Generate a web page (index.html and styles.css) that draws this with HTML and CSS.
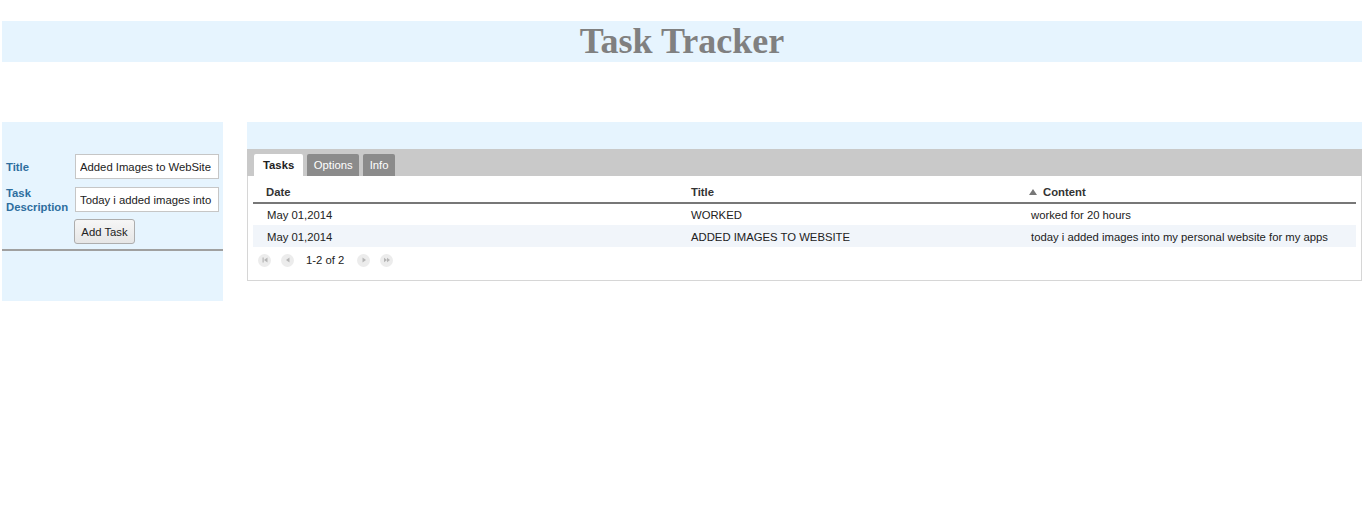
FILE: index.html
```html
<!DOCTYPE html>
<html>
<head>
<meta charset="utf-8">
<title>Task Tracker</title>
<link rel="stylesheet" href="styles.css">
</head>
<body>
<div class="page">
  <header class="banner"><h1>Task Tracker</h1></header>
  <div class="main">
    <aside class="side">
      <form class="form">
        <div class="frow">
          <label class="lbl">Title</label>
          <input class="inp" type="text" value="Added Images to WebSite">
        </div>
        <div class="frow">
          <label class="lbl">Task Description</label>
          <input class="inp" type="text" value="Today i added images into my personal website for my apps">
        </div>
        <div class="frow">
          <span class="lbl"></span>
          <button type="button" class="btn">Add Task</button>
        </div>
      </form>
      <div class="rule"></div>
    </aside>
    <section class="content">
      <div class="strip"></div>
      <div class="box">
        <div class="tabs">
          <span class="tab active">Tasks</span>
          <span class="tab">Options</span>
          <span class="tab">Info</span>
        </div>
        <table class="grid">
          <colgroup><col class="c1"><col class="c2"><col class="c3"></colgroup>
          <thead>
            <tr><th>Date</th><th>Title</th><th class="sorted"><span class="tri"></span>Content</th></tr>
          </thead>
          <tbody>
            <tr><td>May 01,2014</td><td>WORKED</td><td class="ct">worked for 20 hours</td></tr>
            <tr class="alt"><td>May 01,2014</td><td>ADDED IMAGES TO WEBSITE</td><td class="ct">today i added images into my personal website for my apps</td></tr>
          </tbody>
        </table>
        <div class="pager">
          <span class="pb"><svg width="12" height="12" viewBox="0 0 12 12"><rect x="3.5" y="3.5" width="1.2" height="5" fill="#b5b5b5"/><path d="M8.5 3.5 L5 6 L8.5 8.5 Z" fill="#b5b5b5"/></svg></span>
          <span class="pb pb2"><svg width="12" height="12" viewBox="0 0 12 12"><path d="M7.5 3.5 L4 6 L7.5 8.5 Z" fill="#b5b5b5"/></svg></span>
          <span class="pinfo">1-2 of 2</span>
          <span class="pb"><svg width="12" height="12" viewBox="0 0 12 12"><path d="M4.5 3.5 L8 6 L4.5 8.5 Z" fill="#b5b5b5"/></svg></span>
          <span class="pb"><svg width="12" height="12" viewBox="0 0 12 12"><path d="M3 3.7 L6 6 L3 8.3 Z M6 3.7 L9 6 L6 8.3 Z" fill="#b5b5b5"/></svg></span>
        </div>
      </div>
    </section>
  </div>
</div>
</body>
</html>
```
FILE: styles.css
```css
* { box-sizing: border-box; }
html, body { margin: 0; padding: 0; background: #fff; }
body { font-family: "Liberation Sans", Arial, sans-serif; font-size: 11.3px; color: #222; }
.page { padding: 21px 4px 0 2px; }
.banner { background: #e6f4fe; height: 41px; display: flex; align-items: center; justify-content: center; }
.banner h1 { margin: 0; font-family: "Liberation Serif", "Times New Roman", serif; font-weight: bold; font-size: 36px; color: #808080; line-height: 41px; }
.main { display: flex; align-items: flex-start; gap: 24px; margin-top: 60px; }
.side { width: 221px; height: 179px; background: #e6f4fe; padding-top: 32px; }
.form { display: flex; flex-direction: column; gap: 8px; padding-left: 4px; }
.frow { display: flex; align-items: center; height: 25px; }
.lbl { width: 69px; font-weight: bold; color: #2e6e9e; font-size: 11.3px; line-height: 14px; }
.inp { width: 144px; height: 25px; border: 1px solid #c6c6c6; background: #fff; font-family: "Liberation Sans", Arial, sans-serif; font-size: 11.3px; color: #222; padding: 0 4px; margin: 0; }
.btn { width: 61px; height: 25px; margin: -2px 0 0 -1px; font-family: "Liberation Sans", Arial, sans-serif; font-size: 11.3px; color: #222; background: linear-gradient(#f6f6f6, #e6e6e6); border: 1px solid #adadad; border-radius: 3px; padding: 0; }
.rule { margin-top: 4px; height: 2px; background: #a0a0a0; }
.content { flex: 1; }
.strip { height: 27px; background: #e6f4fe; }
.box { border: 1px solid #d6d6d6; border-top: 0; height: 132px; }
.tabs { background: #c9c9c9; height: 27px; display: flex; align-items: flex-end; gap: 4px; padding-left: 7px; margin: 0 -1px; }
.tab { height: 22px; padding: 0 6.5px; line-height: 22px; background: #8b8b8b; color: #fff; border-radius: 2px 2px 0 0; }
.tab.active { background: #fff; color: #222; font-weight: bold; padding: 0 9px; }
.grid { margin: 4px 5px 0 5px; width: calc(100% - 10px); border-collapse: collapse; table-layout: fixed; }
.c1 { width: 425px; }
.c2 { width: 340px; }
.grid th { text-align: left; font-weight: bold; color: #333; height: 23px; padding: 2px 0 0 13px; border-bottom: 2px solid #777; vertical-align: middle; }
.grid th.sorted { padding-left: 11px; }
.tri { display: inline-block; width: 0; height: 0; border-left: 4px solid transparent; border-right: 4px solid transparent; border-bottom: 6px solid #777; margin-right: 6px; vertical-align: 1px; }
.grid td { height: 22px; padding: 1px 0 0 14px; color: #222; }
.grid td:nth-child(2) { padding-left: 13px; }
.grid td.ct { padding-left: 13px; }
.grid tr.alt td { background: #f1f5fa; }
.pager { display: flex; align-items: center; margin: 5px 0 0 10px; height: 16px; }
.pb { width: 13px; height: 13px; border-radius: 50%; background: #ececec; display: flex; align-items: center; justify-content: center; margin-right: 10px; }
.pb2 { margin-right: 12px; }
.pinfo { margin: 0 13px 0 0; color: #222; }
```
